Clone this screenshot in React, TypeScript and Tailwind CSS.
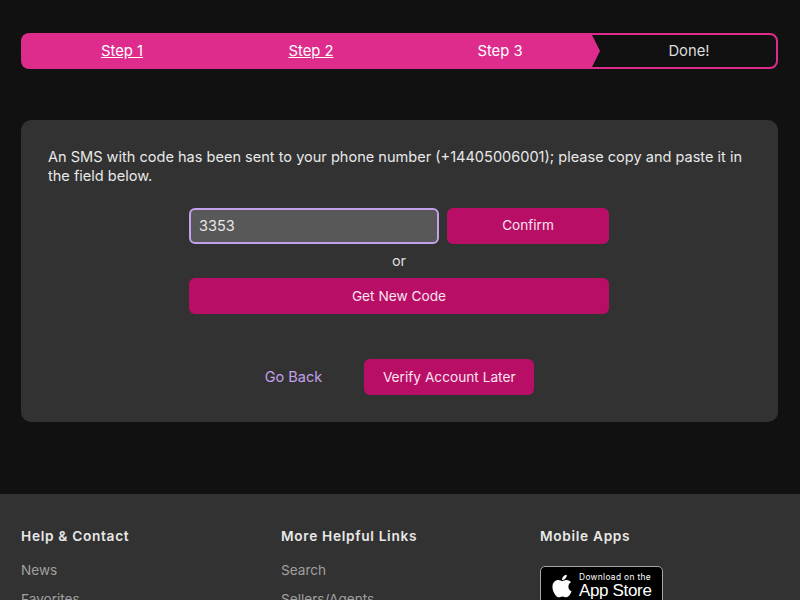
import { FaApple } from "react-icons/fa";

const footerColumns = [
  { title: "Help & Contact", links: ["News", "Favorites"] },
  { title: "More Helpful Links", links: ["Search", "Sellers/Agents"] },
];

const StepBar = () => {
  return (
    <div className="relative flex h-9 items-stretch rounded-lg border-2 border-[#dd2c8c] text-[14.8px] leading-none">
      <a href="#" className="flex w-[189px] items-center justify-center bg-[#dd2c8c] pl-[9px] text-white underline">
        Step 1
      </a>
      <a href="#" className="flex w-[189px] items-center justify-center bg-[#dd2c8c] pl-[9px] text-white underline">
        Step 2
      </a>
      <div className="relative flex w-[191px] items-center justify-center bg-[#dd2c8c] pr-[2px] pl-[9px] text-white">
        Step 3
        <svg
          className="absolute -right-2 top-0 h-8 w-2"
          viewBox="0 0 8 32"
          preserveAspectRatio="none"
        >
          <polygon points="0,0 8,16 0,32" fill="#dd2c8c" />
        </svg>
      </div>
      <div className="flex flex-1 items-center justify-center pl-[10px] text-[#dddddd]">Done!</div>
    </div>
  );
};

const App = () => {
  return (
    <div className="flex h-screen flex-col overflow-hidden bg-[#111111] font-['Inter',sans-serif] text-[#eeeeee]">
      <div className="pt-[33px] pr-[22px] pl-[21px]">
        <StepBar />

        <div className="mt-[51px] h-[302px] rounded-[10px] bg-[#323232] px-[27px] pt-[28px]">
          <p className="text-[14.56px] leading-[19px] text-[#e8e8e8]">
            An SMS with code has been sent to your phone number (+14405006001); please copy and
            paste it in the field below.
          </p>

          <div className="mt-[22px] ml-[141px] w-[420px]">
            <div className="flex gap-2">
              <input
                readOnly
                value="3353"
                className="h-9 w-[250px] rounded-md border-2 border-[#c4a0ea] bg-[#585858] px-2 pb-[2px] text-[14.5px] text-[#e8e8e8] outline-none"
              />
              <button className="h-9 flex-1 rounded-md bg-[#b90e66] pb-[2px] text-[13.6px] text-[#fbe4f1]">
                Confirm
              </button>
            </div>
            <div className="flex h-[34px] items-center justify-center text-[14.5px] text-[#dddddd]">
              or
            </div>
            <button className="h-9 w-full rounded-md bg-[#b90e66] text-[13.7px] text-[#fbe4f1]">
              Get New Code
            </button>
          </div>

          <div className="mt-[45px] flex items-center justify-center gap-[42px]">
            <a href="#" className="text-[14.5px] text-[#c4a0ea]">
              Go Back
            </a>
            <button className="h-9 w-[170px] rounded-md bg-[#b90e66] text-[13.7px] text-[#fbe4f1]">
              Verify Account Later
            </button>
          </div>
        </div>
      </div>

      <footer className="mt-[72px] flex-1 bg-[#323232] px-[21px] pt-[33px]">
        <div className="grid grid-cols-[260px_259px_1fr]">
          {footerColumns.map((col) => (
            <div key={col.title}>
              <h3 className="text-[13.7px] leading-[18px] font-semibold tracking-[0.05em] text-[#e8e8e8]">
                {col.title}
              </h3>
              <ul className="mt-[15px] flex flex-col gap-[9px] text-[13.6px] leading-[20px] text-[#a0a0a0]">
                {col.links.map((link) => (
                  <li key={link}>{link}</li>
                ))}
              </ul>
            </div>
          ))}
          <div>
            <h3 className="text-[13.7px] leading-[18px] font-semibold tracking-[0.05em] text-[#e8e8e8]">
              Mobile Apps
            </h3>
            <div className="mt-[21px] flex h-10 w-[123px] items-center gap-1 rounded-[5px] border border-[#a6a6a6] bg-black pl-[8px] text-white">
              <FaApple size={26} />
              <div className="flex flex-col leading-none">
                <span className="text-[8.4px] tracking-[0.04em]">Download on the</span>
                <span className="font-['Liberation_Sans',sans-serif] text-[17px] tracking-[-0.02em]">App Store</span>
              </div>
            </div>
          </div>
        </div>
      </footer>
    </div>
  );
};

export default App;
